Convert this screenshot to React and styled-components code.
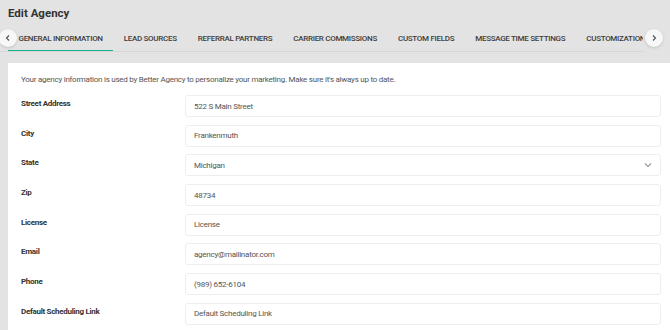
import styled, { createGlobalStyle } from "styled-components";

const GlobalStyle = createGlobalStyle`
  html, body {
    margin: 0;
    padding: 0;
    background: #e3e3e3;
    font-family: Roboto, "Liberation Sans", sans-serif;
    overflow: hidden;
  }
`;

const Page = styled.div`
  width: 670px;
  height: 330px;
  display: flex;
  flex-direction: column;
  overflow: hidden;
`;

const Title = styled.h1`
  margin: 0;
  padding: 6px 8px 0;
  font-size: 11.5px;
  font-weight: 700;
  color: #333;
  line-height: 14px;
`;

const TabBar = styled.div`
  position: relative;
  margin-top: 6px;
  height: 26px;
  padding-right: 27px;
`;

const TabScroller = styled.div`
  display: flex;
  padding-left: 8px;
  height: 26px;
  overflow: hidden;
  border-bottom: 1px solid #d6d6d6;
  box-sizing: border-box;
`;

const Tab = styled.div`
  flex: none;
  padding: 0 10.5px;
  height: 26px;
  display: flex;
  align-items: center;
  font-size: 8px;
  letter-spacing: -0.3px;
  font-weight: 500;
  color: #3d3d3d;
  text-transform: uppercase;
  box-sizing: border-box;
  border-bottom: 2px solid ${(p) => (p.$active ? "#16b28f" : "transparent")};
  margin-bottom: -1px;
`;

const Arrow = styled.button`
  position: absolute;
  top: 3px;
  ${(p) => (p.$side === "left" ? "left: -1px;" : "right: 7px;")}
  width: 18px;
  height: 18px;
  border-radius: 50%;
  border: none;
  padding: 0;
  background: #f7f7f7;
  box-shadow: 0 1px 3px rgba(0, 0, 0, 0.15);
  display: flex;
  align-items: center;
  justify-content: center;
  color: #555;
`;

const Card = styled.div`
  margin: 11px 0 0 8px;
  background: #fff;
  padding: 11px 9px 0 13px;
  flex: 1;
`;

const Intro = styled.p`
  margin: 0 0 9px;
  font-size: 8px;
  letter-spacing: -0.25px;
  color: #555;
  line-height: 12px;
`;

const Row = styled.div`
  display: grid;
  grid-template-columns: 164px 1fr;
  margin-bottom: 7.7px;
`;

const Label = styled.div`
  font-size: 8px;
  letter-spacing: -0.3px;
  font-weight: 700;
  color: #333;
  padding-top: 4px;
`;

const Field = styled.div`
  height: 22px;
  border: 1px solid #eeeeee;
  border-radius: 3px;
  box-sizing: border-box;
  display: flex;
  align-items: center;
  justify-content: space-between;
  padding: 0 8px;
  font-size: 8px;
  letter-spacing: -0.25px;
  color: #555;
`;

const Caret = styled.span`
  display: flex;
  color: #999;
`;

const Chevron = ({ dir }) => (
  <svg width="8" height="8" viewBox="0 0 8 8" fill="none" stroke="currentColor" strokeWidth="1.2">
    {dir === "left" && <path d="M5 1.5 L2.5 4 L5 6.5" />}
    {dir === "right" && <path d="M3 1.5 L5.5 4 L3 6.5" />}
    {dir === "down" && <path d="M1 2.5 L4 5.5 L7 2.5" />}
  </svg>
);

const tabs = [
  "General Information",
  "Lead Sources",
  "Referral Partners",
  "Carrier Commissions",
  "Custom Fields",
  "Message Time Settings",
  "Customizations",
];

const fields = [
  ["Street Address", "522 S Main Street"],
  ["City", "Frankenmuth"],
  ["State", "Michigan", true],
  ["Zip", "48734"],
  ["License", "License"],
  ["Email", "agency@mailinator.com"],
  ["Phone", "(989) 652-6104"],
  ["Default Scheduling Link", "Default Scheduling Link"],
];

export default function App() {
  return (
    <Page>
      <GlobalStyle />
      <Title>Edit Agency</Title>
      <TabBar>
        <TabScroller>
          {tabs.map((t, i) => (
            <Tab key={t} $active={i === 0}>
              {t}
            </Tab>
          ))}
        </TabScroller>
        <Arrow $side="left">
          <Chevron dir="left" />
        </Arrow>
        <Arrow $side="right">
          <Chevron dir="right" />
        </Arrow>
      </TabBar>
      <Card>
        <Intro>
          Your agency information is used by Better Agency to personalize your marketing. Make sure it's always up to date.
        </Intro>
        {fields.map(([label, value, select]) => (
          <Row key={label}>
            <Label>{label}</Label>
            <Field>
              {value}
              {select && (
                <Caret>
                  <Chevron dir="down" />
                </Caret>
              )}
            </Field>
          </Row>
        ))}
      </Card>
    </Page>
  );
}
